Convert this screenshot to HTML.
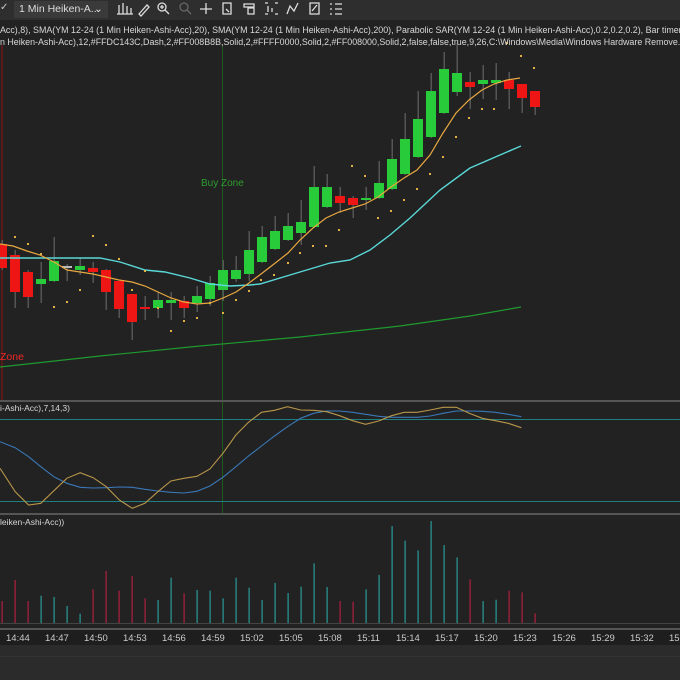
<!DOCTYPE html>
<html><head><meta charset="utf-8"><style>
html,body{margin:0;padding:0;background:#222;width:680px;height:680px;overflow:hidden;font-family:"Liberation Sans",sans-serif}
#wrap{position:relative;width:680px;height:680px;overflow:hidden}
.tb{position:absolute;left:0;top:0;width:680px;height:20px;background:#2e2e2e}
.dd{position:absolute;left:14px;top:1px;width:94px;height:17px;background:#3a3a3a;color:#ddd;font-size:10.5px;line-height:17px;padding-left:5px;box-sizing:border-box}
.t{position:absolute;color:#d8d8d8;font-size:8.9px;white-space:nowrap}
.ax{position:absolute;top:633px;color:#ccc;font-size:9.5px}
svg{position:absolute;left:0;top:0}
</style></head><body><div id="wrap">
<svg id="s" width="680" height="680"></svg>
<div class="tb"><span style="position:absolute;left:0;top:2px;color:#ccc;font-size:10px">✓</span><div class="dd">1 Min Heiken-A... <span style="position:absolute;left:80px">⌄</span></div>
<svg width="680" height="20" style="left:0;top:0" stroke="#ddd" fill="none" stroke-width="1.3">
<path d="M119 14V5M123 14V3M127 14V6M131 14V8M117 14h16"/>
<path d="M139 14l8-9 2 2-8 9z"/>
<circle cx="162" cy="7" r="4"/><path d="M165 10l4 4M160 7h4M162 5v4"/>
<circle cx="184" cy="7" r="4" stroke="#666"/><path d="M187 10l4 4" stroke="#666"/>
<path d="M206 3v11M200 9h12"/>
<path d="M223 3h8v11h-8zM226 9l3 3"/>
<path d="M244 4h10v3h-10zM248 8h6v6h-6z"/>
<path d="M265 3h3M265 14h3M275 3h3M275 14h3M268 6v6M272 8v4"/>
<path d="M287 14l3-8 4 5 4-8"/>
<path d="M310 3h9v11h-9zM312 11l5-6"/>
<path d="M330 4h2M335 4h7M330 9h2M335 9h7M330 14h2M335 14h7"/>
</svg></div>
<div class="t" style="left:0;top:25px">Acc),8), SMA(YM 12-24 (1 Min Heiken-Ashi-Acc),20), SMA(YM 12-24 (1 Min Heiken-Ashi-Acc),200), Parabolic SAR(YM 12-24 (1 Min Heiken-Ashi-Acc),0.2,0.2,0.2), Bar timer(YM 12-24 (1 Min Heik</div>
<div class="t" style="left:0;top:37px">n Heiken-Ashi-Acc),12,#FFDC143C,Dash,2,#FF008B8B,Solid,2,#FFFF0000,Solid,2,#FF008000,Solid,2,false,false,true,9,26,C:\Windows\Media\Windows Hardware Remove.wav,C:\Windows\Medi</div>
<div class="t" style="left:201px;top:178px;color:#2e9e2e;font-size:10px">Buy Zone</div>
<div class="t" style="left:0;top:351px;color:#f02828;font-size:10.5px">Zone</div>
<div class="t" style="left:0;top:403px;font-size:8.5px">i-Ashi-Acc),7,14,3)</div>
<div class="t" style="left:0;top:517px;font-size:8.5px">leiken-Ashi-Acc))</div>
<div class="ax" style="left:6px">14:44</div><div class="ax" style="left:45px">14:47</div><div class="ax" style="left:84px">14:50</div><div class="ax" style="left:123px">14:53</div><div class="ax" style="left:162px">14:56</div><div class="ax" style="left:201px">14:59</div><div class="ax" style="left:240px">15:02</div><div class="ax" style="left:279px">15:05</div><div class="ax" style="left:318px">15:08</div><div class="ax" style="left:357px">15:11</div><div class="ax" style="left:396px">15:14</div><div class="ax" style="left:435px">15:17</div><div class="ax" style="left:474px">15:20</div><div class="ax" style="left:513px">15:23</div><div class="ax" style="left:552px">15:26</div><div class="ax" style="left:591px">15:29</div><div class="ax" style="left:630px">15:32</div><div class="ax" style="left:669px">15:35</div>
</div>
<script>
var s='';
function r(x,y,w,h,c){s+='<rect x="'+x+'" y="'+y+'" width="'+w+'" height="'+h+'" fill="'+c+'"/>';}
r(0,0,680,680,'#222');
r(0,400,680,2,'#555');r(0,513,680,2,'#555');r(0,623,680,1,'#444');r(0,628,680,2,'#555');r(0,630,680,15,'#1e1e1e');r(0,645,680,35,'#2b2b2b');r(0,656,680,1,'#333');
r(1,45,2,355,'#5a1a1a');r(222,45,1,355,'#1f5a1f');r(222,402,1,111,'#1f5a1f');
r(0,419,680,1,'#1e7e80');r(0,501,680,1,'#1e7e80');
var C=[[244,268,'r',240,270],[255,292,'r',250,308],[272,297,'r',270,308],[279,284,'g',262,303],[261,281,'g',237,282],[266,267,'n',264,281],[266,270,'g',258,275],[268,272,'r',262,283],[270,292,'r',269,310],[281,309,'r',281,318],[294,322,'r',294,340],[307,309,'r',296,320],[300,308,'g',292,318],[300,303,'g',292,320],[301,308,'r',296,318],[296,303,'g',286,312],[283,299,'g',276,306],[270,290,'g',260,301],[270,279,'g',256,282],[250,274,'g',231,281],[237,262,'g',226,263],[231,249,'g',216,250],[226,240,'g',213,241],[222,233,'g',200,245],[187,227,'g',166,228],[187,207,'g',174,208],[196,203,'r',187,213],[198,205,'r',196,218],[198,200,'g',187,210],[183,198,'g',161,199],[159,189,'g',139,190],[139,174,'g',113,175],[119,157,'g',91,158],[91,137,'g',73,138],[69,113,'g',52,114],[73,92,'g',43,96],[82,87,'r',72,109],[80,84,'g',65,99],[80,83,'g',63,100],[80,89,'r',72,109],[84,98,'r',84,113],[91,107,'r',91,115]];
var col={r:'#ee1515',g:'#28cc3a',n:'#bbb'};
C.forEach(function(c,i){var x=2+13*i;r(x-0.5,c[3],1.5,c[4]-c[3],'#555');var h=Math.max(c[1]-c[0],2);r(x-5,c[0],10,h,col[c[2]]);});
function pl(p,c,w){s+='<polyline fill="none" stroke="'+c+'" stroke-width="'+(w||1.2)+'" points="'+p.map(function(a){return a.join(',')}).join(' ')+'"/>';}
pl([[0,367],[100,356],[200,346],[300,337],[400,326],[470,316],[521,307]],'#1f9a30',1.2);
pl([[0,258],[100,258],[120,262],[145,270],[165,272],[190,278],[210,284],[230,286],[250,285],[260,284],[290,275],[330,263],[350,260],[370,250],[390,235],[410,218],[440,190],[470,168],[500,155],[521,146]],'#5ad8d8',1.4);
pl([[0,244],[13,246],[27,251],[40,255],[54,262],[67,270],[80,272],[93,274],[106,277],[119,280],[132,282],[145,286],[158,292],[171,298],[184,302],[197,304],[210,303],[223,298],[236,292],[249,283],[261,274],[274,264],[288,253],[300,240],[313,228],[326,218],[339,212],[352,208],[365,204],[378,197],[391,187],[404,178],[417,170],[430,155],[443,133],[456,113],[469,100],[482,90],[494,84],[507,80],[520,78]],'#e8a840',1.2);
var D=[[15,237],[28,244],[41,254],[54,307],[67,302],[80,290],[93,236],[106,245],[119,259],[132,290],[145,271],[158,308],[171,331],[184,321],[197,318],[210,303],[223,313],[236,300],[249,291],[261,280],[274,275],[288,263],[300,253],[313,246],[326,246],[339,230],[352,166],[365,176],[378,218],[391,211],[404,200],[417,189],[430,174],[443,157],[456,137],[469,118],[482,109],[494,109],[521,56],[534,68],[507,43]];
D.forEach(function(d){r(d[0]-1,d[1]-1,2,2,'#e0b040');});
var O=[[0,220],[35,290],[66,330],[94,325],[154,250],[185,233],[215,248],[245,275],[275,315],[305,340],[334,325],[364,290],[394,258],[424,250],[454,244],[484,222],[514,175],[544,120],[573,82],[603,52],[633,46],[663,35],[693,45],[723,46],[753,50],[783,62],[813,77],[843,88],[873,78],[903,62],[932,52],[962,52],[992,45],[1022,37],[1052,37],[1082,55],[1112,70],[1142,77],[1172,85],[1202,98]];
var B=[[0,140],[35,158],[66,185],[94,215],[124,245],[154,265],[185,277],[215,279],[245,278],[275,276],[305,277],[334,283],[364,288],[394,292],[424,294],[454,289],[484,273],[514,247],[544,215],[573,183],[603,153],[633,123],[663,95],[693,70],[723,55],[753,48],[783,48],[813,52],[843,58],[873,64],[903,67],[932,67],[962,67],[992,63],[1022,55],[1052,48],[1082,48],[1112,49],[1142,52],[1172,58],[1202,65]];
function cv(a){return a.map(function(p){return [(p[0]*0.4337).toFixed(1),(395+p[1]/3).toFixed(1)];});}
pl(cv(B),'#3a78b8',1.1);pl(cv(O),'#b8964a',1.1);
var V=[618,555,618,602,606,633,656,583,528,587,543,610,615,548,595,585,587,610,548,578,615,564,594,575,505,576,618,620,583,540,393,437,466,378,450,487,553,618,614,587,592,655];
var VC='rrrttttrrrrrttrtttttttttttrrttttttttrttrrr';
V.forEach(function(v,i){var x=2+13*i,y=395+v/3;r(x-0.5,y,1.2,623-y,VC[i]=='r'?'#b02040':'#2a9a9a');});
document.getElementById('s').innerHTML=s;
</script>
</body></html>
